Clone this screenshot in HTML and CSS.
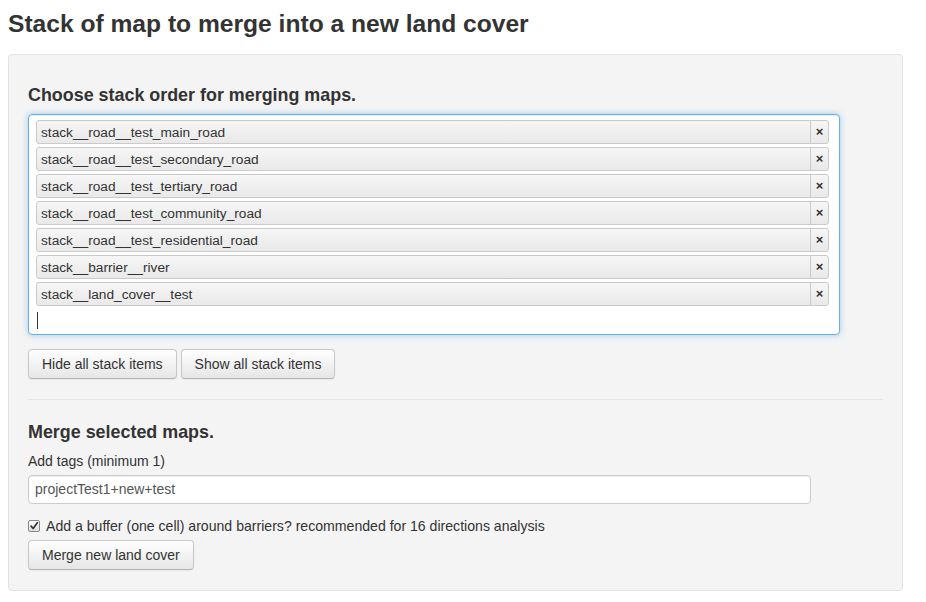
FILE: index.html
```html
<!DOCTYPE html>
<html>
<head>
<meta charset="utf-8">
<link rel="stylesheet" href="styles.css">
</head>
<body>
<h2 class="title">Stack of map to merge into a new land cover</h2>
<div class="well">
  <h4 class="section-title">Choose stack order for merging maps.</h4>
  <div class="selectize">
    <div class="item"><span class="item-label">stack__road__test_main_road</span><span class="remove">×</span></div>
    <div class="item"><span class="item-label">stack__road__test_secondary_road</span><span class="remove">×</span></div>
    <div class="item"><span class="item-label">stack__road__test_tertiary_road</span><span class="remove">×</span></div>
    <div class="item"><span class="item-label">stack__road__test_community_road</span><span class="remove">×</span></div>
    <div class="item"><span class="item-label">stack__road__test_residential_road</span><span class="remove">×</span></div>
    <div class="item"><span class="item-label">stack__barrier__river</span><span class="remove">×</span></div>
    <div class="item"><span class="item-label">stack__land_cover__test</span><span class="remove">×</span></div>
    <div class="caret-row"><span class="caret"></span></div>
  </div>
  <div class="btn-row">
    <button class="btn">Hide all stack items</button>
    <button class="btn">Show all stack items</button>
  </div>
  <hr class="divider">
  <h4 class="section-title second">Merge selected maps.</h4>
  <label class="field-label">Add tags (minimum 1)</label>
  <div class="text-input">projectTest1+new+test</div>
  <label class="check-row">
    <span class="checkbox"><svg width="12" height="12" viewBox="0 0 12 12"><path d="M2.5 6.2 L5 9 L10 2" fill="none" stroke="#333" stroke-width="2" stroke-linecap="round" stroke-linejoin="round"/></svg></span>
    <span>Add a buffer (one cell) around barriers? recommended for 16 directions analysis</span>
  </label>
  <button class="btn merge">Merge new land cover</button>
</div>
</body>
</html>
```
FILE: styles.css
```css
* { box-sizing: border-box; }
body {
  margin: 0;
  padding: 0 8px;
  font-family: "Liberation Sans", Arial, sans-serif;
  font-size: 14px;
  color: #333;
  background: #fff;
}
.title {
  margin: 0;
  padding-top: 10px;
  height: 54px;
  font-size: 24.6px;
  line-height: 28px;
  font-weight: bold;
  color: #333;
}
.well {
  width: 895px;
  background: #f4f4f4;
  border: 1px solid #e3e3e3;
  border-radius: 4px;
  padding: 19px 19px 19px 19px;
  height: 537px;
}
.section-title {
  margin: 0;
  padding-top: 11px;
  height: 40px;
  font-size: 17.9px;
  line-height: 20px;
  font-weight: bold;
  color: #333;
}
.selectize {
  width: 812px;
  background: #fff;
  border: 1px solid #66afe9;
  border-radius: 4px;
  box-shadow: inset 0 1px 1px rgba(0,0,0,0.075), 0 0 6px rgba(102,175,233,0.6);
  padding: 5px 10px 2px 7px;
  display: flex;
  flex-direction: column;
  gap: 3px;
}
.item {
  height: 24px;
  display: flex;
  border: 1px solid #cacaca;
  border-radius: 3px;
  background: linear-gradient(#f6f6f6, #e9e9e9);
  font-size: 13.7px;
  line-height: 23px;
  color: #333;
}
.item-label { flex: 1; padding-left: 4px; }
.remove {
  width: 18px;
  border-left: 1px solid #cacaca;
  text-align: center;
  font-weight: bold;
  font-size: 13px;
  line-height: 22px;
  color: #333;
}
.caret-row { height: 23px; display: flex; align-items: center; padding-left: 1px; }
.caret { width: 1px; height: 17px; background: #333; }
.btn-row {
  display: flex;
  gap: 4px;
  margin-top: 14px;
}
.btn {
  height: 30px;
  padding: 0 13px;
  font-family: "Liberation Sans", Arial, sans-serif;
  font-size: 14px;
  color: #333;
  background: linear-gradient(#ffffff, #e6e6e6);
  border: 1px solid #c8c8c8;
  border-bottom-color: #b3b3b3;
  border-radius: 4px;
  box-shadow: inset 0 1px 0 rgba(255,255,255,0.2), 0 1px 2px rgba(0,0,0,0.05);
}
.divider {
  margin: 20px 0 0 0;
  border: 0;
  border-top: 1px solid #e6e6e6;
  height: 0;
}
.second { padding-top: 22px; height: 51px; }
.field-label {
  display: block;
  height: 24px;
  line-height: 20px;
  font-size: 14px;
}
.text-input {
  width: 783px;
  height: 29px;
  background: #fff;
  border: 1px solid #ccc;
  border-radius: 4px;
  padding: 0 6px;
  line-height: 27px;
  font-size: 14px;
  color: #555;
  box-shadow: inset 0 1px 1px rgba(0,0,0,0.075);
}
.check-row {
  display: flex;
  align-items: center;
  gap: 6px;
  margin-top: 12px;
  height: 20px;
  font-size: 14.1px;
}
.checkbox {
  width: 12px;
  height: 12px;
  border: 1px solid #888;
  border-radius: 2px;
  background: linear-gradient(#fff, #ddd);
  display: flex;
  align-items: center;
  justify-content: center;
}
.checkbox svg { display: block; width: 10px; height: 10px; }
.merge { margin-top: 4px; }
```
